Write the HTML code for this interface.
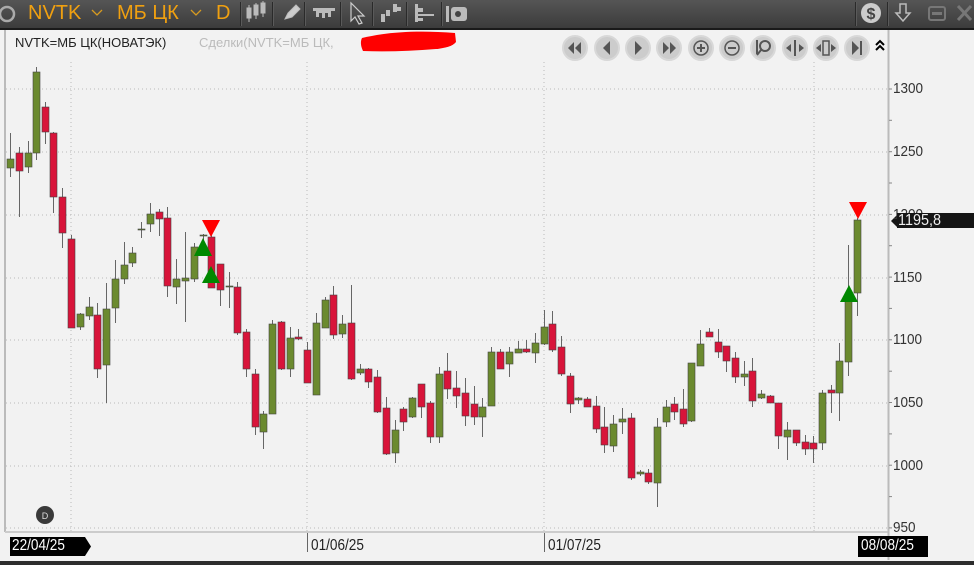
<!DOCTYPE html>
<html><head><meta charset="utf-8">
<style>
html,body{margin:0;padding:0;width:974px;height:565px;overflow:hidden;background:#f2f2f2;font-family:"Liberation Sans",sans-serif;}
#top{position:absolute;left:0;top:0;width:974px;height:28px;background:linear-gradient(#555,#3c3c3c);border-bottom:2px solid #1a1a1a;}
.o{position:absolute;top:2px;color:#f0a010;font-size:20px;}
.sep{position:absolute;top:2px;width:1px;height:24px;background:#2a2a2a;border-right:1px solid #5a5a5a;}
#bot{position:absolute;left:0;top:561px;width:974px;height:4px;background:#2d2d2d;}
.yl{position:absolute;left:893px;font-size:15px;color:#333;transform:scaleX(0.9);transform-origin:left;}
.dl{position:absolute;top:537px;font-size:16px;color:#222;transform:scaleX(0.85);transform-origin:left;white-space:nowrap;}
</style></head><body>
<div id="top">
<svg width="974" height="28" style="position:absolute;left:0;top:0">
<circle cx="7" cy="14" r="7" fill="none" stroke="#aaa" stroke-width="2.5"/>
<path d="M92 10l5 5 5-5M191 10l5 5 5-5" stroke="#d79a20" fill="none" stroke-width="1.3"/>
<g fill="#bbb" stroke="#bbb">
<rect x="247" y="8" width="4" height="10"/><rect x="254" y="5" width="4" height="10"/><rect x="261" y="3" width="4" height="10"/><line x1="249" y1="5" x2="249" y2="22"/><line x1="256" y1="3" x2="256" y2="19"/><line x1="263" y1="1" x2="263" y2="17"/>
<path d="M285 19l3 -6 8-8 4 4-8 8z" fill="#ccc"/>
<path d="M313 8h22v3h-4v6h-3v-4h-3v5h-3v-5h-3v4h-3v-6h-3z" stroke="none"/>
<path d="M351 3l0 18 4-4 4 7 3-1-4-7 6 0z" fill="none" stroke="#ccc" stroke-width="1.2"/>
<rect x="381" y="14" width="4" height="8" stroke="none"/><rect x="386" y="10" width="4" height="6" stroke="none"/><rect x="393" y="4" width="4" height="8" stroke="none"/><rect x="397" y="7" width="4" height="4" stroke="none"/>
<rect x="415" y="4" width="3" height="18" stroke="none"/><rect x="418" y="8" width="5" height="4" stroke="none"/><rect x="418" y="14" width="16" height="2" stroke="none"/><rect x="418" y="18" width="5" height="3" stroke="none"/>
<rect x="446" y="6" width="3" height="16" stroke="none"/><rect x="451" y="7" width="16" height="14" rx="3" stroke="none"/>
</g>
<circle cx="458" cy="14" r="3" fill="#444"/>
<circle cx="871" cy="13" r="10" fill="#ccc"/><text x="871" y="19" font-size="16" font-weight="bold" fill="#444" text-anchor="middle" font-family="Liberation Sans">$</text>
<path d="M900 4h6v9h4l-7 8-7-8h4z" fill="none" stroke="#bbb" stroke-width="1.5"/>
<rect x="929" y="7" width="16" height="13" rx="2" fill="none" stroke="#777" stroke-width="2"/><rect x="932" y="12" width="10" height="3" fill="#777"/>
<path d="M958 6l13 14M971 6l-13 14" stroke="#777" stroke-width="3"/>
</svg>
<span class="o" style="left:28px">NVTK</span>
<span class="o" style="left:117px">МБ ЦК</span>
<span class="o" style="left:216px">D</span>
<div class="sep" style="left:240px"></div><div class="sep" style="left:272px"></div><div class="sep" style="left:304px"></div><div class="sep" style="left:340px"></div><div class="sep" style="left:372px"></div><div class="sep" style="left:406px"></div><div class="sep" style="left:441px"></div><div class="sep" style="left:855px"></div><div class="sep" style="left:887px"></div>
</div>
<div style="position:absolute;left:15px;top:35px;font-size:13px;color:#222">NVTK=МБ ЦК(НОВАТЭК)</div>
<div style="position:absolute;left:199px;top:35px;font-size:13px;color:#bbb">Сделки(NVTK=МБ ЦК,</div>
<svg id="ch" width="974" height="565" style="position:absolute;left:0;top:0"></svg>
<div class="yl" style="top:80px">1300</div><div class="yl" style="top:143px">1250</div><div class="yl" style="top:206px">1200</div><div class="yl" style="top:269px">1150</div><div class="yl" style="top:331px">1100</div><div class="yl" style="top:394px">1050</div><div class="yl" style="top:457px">1000</div><div class="yl" style="top:519px">950</div>
<div style="position:absolute;left:897px;top:213px;width:77px;height:15px;background:#151515;"></div>
<div class="yl" style="left:898px;top:212px;color:#eee;font-size:16px">1195,8</div>
<div style="position:absolute;left:10px;top:537px;width:75px;height:19px;background:#000"></div>
<div class="dl" style="left:12px;color:#fff">22/04/25</div>
<div class="dl" style="left:311px">01/06/25</div>
<div class="dl" style="left:548px">01/07/25</div>
<div style="position:absolute;left:858px;top:536px;width:70px;height:21px;background:#000"></div>
<div class="dl" style="left:861px;color:#fff">08/08/25</div>
<div id="bot"></div>
<script>
var d=[[10,133,177,159,168,1],[19,147,217,153,171,0],[28,141,173,153,167,1],[36,67,160,72,153,1],[45,102,144,107,132,0],[53,132,213,133,197,0],[62,188,248,197,233,0],[71,235,327,239,328,0],[80,313,330,314,327,1],[89,297,320,307,316,1],[97,303,378,315,369,0],[106,283,403,309,365,1],[115,260,323,279,308,1],[124,242,284,265,279,1],[132,247,267,253,263,1],[141,222,238,229,230,1],[150,203,232,214,224,1],[159,209,236,212,219,0],[167,207,297,218,286,0],[176,259,304,279,287,1],[185,232,322,278,281,1],[194,243,282,247,279,1],[203,234,245,235,236,1],[211,233,288,237,288,0],[220,264,306,264,290,0],[229,272,308,286,287,1],[237,282,335,287,333,0],[246,329,377,332,369,0],[255,369,435,374,427,0],[263,411,449,414,432,1],[272,320,414,324,414,1],[281,321,370,322,369,0],[290,327,377,338,369,1],[298,329,340,337,339,0],[307,342,383,350,383,0],[316,313,395,323,395,1],[325,297,328,300,328,1],[333,286,339,295,335,0],[342,315,338,324,334,1],[351,285,380,323,379,0],[360,364,375,369,373,1],[368,368,388,369,382,0],[377,370,413,377,412,0],[386,397,455,408,454,0],[395,420,463,430,453,1],[403,407,431,409,422,0],[412,397,418,398,417,1],[421,384,418,384,407,0],[430,401,443,403,437,0],[439,367,443,374,437,1],[447,353,399,371,389,0],[456,371,408,388,396,0],[465,378,426,393,416,0],[474,386,425,404,417,0],[482,398,437,407,417,1],[491,347,406,352,406,1],[500,349,369,352,369,0],[509,347,377,352,364,1],[518,341,353,349,353,1],[526,340,353,349,352,0],[535,333,363,343,353,1],[544,310,345,327,344,1],[552,311,352,324,350,0],[561,336,376,347,374,0],[570,373,413,376,404,0],[578,397,404,398,400,1],[587,397,407,399,407,0],[596,396,433,406,429,0],[604,407,453,427,445,0],[613,415,452,424,446,1],[622,408,434,419,422,1],[631,413,480,418,478,0],[640,470,476,472,474,1],[648,469,484,473,482,0],[657,418,507,427,483,1],[666,400,427,407,422,1],[674,397,420,404,412,0],[683,389,427,409,424,0],[691,363,422,363,421,1],[700,330,366,344,366,1],[709,328,336,332,337,0],[718,329,358,342,352,0],[726,346,372,346,361,0],[735,352,383,358,377,0],[744,361,386,374,377,1],[752,358,407,371,401,0],[761,390,399,394,398,1],[770,395,403,396,403,0],[778,403,449,403,436,0],[787,422,460,430,437,1],[796,430,446,430,443,0],[805,435,455,442,449,0],[813,436,463,443,449,0],[822,390,450,393,443,1],[831,385,413,390,393,0],[839,343,421,361,393,1],[848,245,376,300,362,1],[857,218,316,220,293,1]];
var s='';
[89,152,215,278,340,403,466,528].forEach(function(y){s+='<line x1="6" y1="'+y+'" x2="887" y2="'+y+'" stroke="#bbb" stroke-dasharray="1,3"/>';});
[71,307,544,814].forEach(function(x){s+='<line x1="'+x+'" y1="62" x2="'+x+'" y2="531" stroke="#bbb" stroke-dasharray="1,3"/>';});
s+='<line x1="5" y1="30" x2="5" y2="532" stroke="#bbb" stroke-width="2"/>';
s+='<line x1="5" y1="532" x2="888" y2="532" stroke="#ccc" stroke-width="2"/>';
s+='<line x1="888.5" y1="30" x2="888.5" y2="560" stroke="#bbb" stroke-width="2"/>';
for(var y=89;y<540;y+=31.35){s+='<line x1="889" y1="'+y.toFixed(1)+'" x2="892" y2="'+y.toFixed(1)+'" stroke="#888"/>';}
s+='<line x1="307.5" y1="533" x2="307.5" y2="552" stroke="#666"/><line x1="544.5" y1="533" x2="544.5" y2="552" stroke="#666"/>';
s+='<path d="M85 537l6 9.5-6 9.5z" fill="#000"/>';
s+='<path d="M891 221l7-7v14z" fill="#151515"/>';
d.forEach(function(c){var col=c[5]?'#6b8a2f':'#d8143a';
s+='<line x1="'+(c[0]+.5)+'" y1="'+c[1]+'" x2="'+(c[0]+.5)+'" y2="'+c[2]+'" stroke="#666"/>';
var h=Math.max(1,c[4]-c[3]);s+='<rect x="'+(c[0]-3)+'" y="'+c[3]+'" width="7" height="'+h+'" fill="'+col+'" stroke="#444" stroke-width="0.6"/>';});
s+='<path d="M202 220h18l-9 17z" fill="#f00"/><path d="M849 202h18l-9 17z" fill="#f00"/>';
s+='<path d="M194 256h18l-9-18z" fill="#080"/><path d="M202 283h18l-9-17z" fill="#080"/><path d="M840 302h18l-9-17z" fill="#080"/>';
var bx=[575,607,638,669,701,732,763,795,826,857];
bx.forEach(function(x,i){s+='<circle cx="'+x+'" cy="48" r="12" fill="#ccc" stroke="#d8d8d8" stroke-width="2"/>';});
var g='#555';
s+='<path d="M568 48l6-6v12zM575 48l6-6v12z" fill="'+g+'"/>';
s+='<path d="M603 48l7-7v14z" fill="'+g+'"/><path d="M635 41l7 7-7 7z" fill="'+g+'"/>';
s+='<path d="M663 42l6 6-6 6zM670 42l6 6-6 6z" fill="'+g+'"/>';
s+='<circle cx="701" cy="48" r="7" fill="none" stroke="'+g+'" stroke-width="1.5"/><path d="M697 48h8M701 44v8" stroke="'+g+'" stroke-width="2"/>';
s+='<circle cx="732" cy="48" r="7" fill="none" stroke="'+g+'" stroke-width="1.5"/><path d="M728 48h8" stroke="'+g+'" stroke-width="2"/>';
s+='<circle cx="765" cy="46" r="5" fill="none" stroke="'+g+'" stroke-width="2"/><path d="M761 50l-4 5M757 40v14" stroke="'+g+'" stroke-width="2"/>';
s+='<path d="M795 40v16" stroke="'+g+'" stroke-width="2"/><path d="M786 48l5-4v8zM804 48l-5-4v8z" fill="'+g+'"/>';
s+='<rect x="823" y="41" width="6" height="14" fill="none" stroke="'+g+'" stroke-width="1.5"/><path d="M816 48l5-4v8zM836 48l-5-4v8z" fill="'+g+'"/>';
s+='<path d="M852 41l7 7-7 7z" fill="'+g+'"/><path d="M861 41v14" stroke="'+g+'" stroke-width="2"/>';
s+='<path d="M876 45l4-4 4 4M876 50l4-4 4 4" stroke="#000" stroke-width="2" fill="none"/>';
s+='<path d="M362 38c25-6 55-8 93-5l1 9c-3 4-10 6-20 7c-25 2-50 3-73 2c-2-4-3-9-1-13z" fill="#f00"/>';
s+='<circle cx="45" cy="515" r="9" fill="#3a3a3a"/><text x="45" y="519" font-size="9" fill="#ddd" text-anchor="middle" font-family="Liberation Sans">D</text>';
document.getElementById('ch').innerHTML=s;
</script>
</body></html>
